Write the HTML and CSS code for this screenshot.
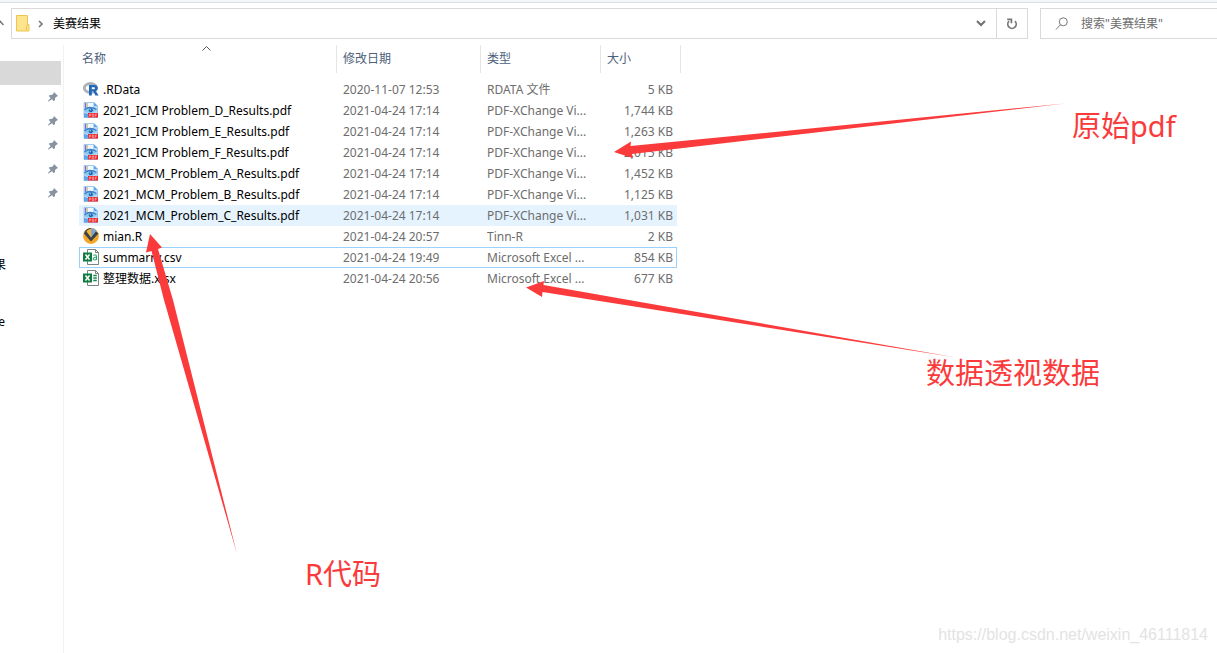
FILE: index.html
```html
<!DOCTYPE html>
<html lang="zh-CN">
<head>
<meta charset="utf-8">
<title>美赛结果</title>
<link rel="stylesheet" href="styles.css">
</head>
<body>
<svg class="defs" width="0" height="0" aria-hidden="true">
  <symbol id="pdf" viewBox="0 0 16 16">
    <path d="M1 .5h10l3.500 3.500v11.500H1z" fill="#b5d8f7" stroke="#8fc0ec" stroke-width=".8"/>
    <path d="M5 1h5v4H5z" fill="#f2f8ff"/><path d="M2 1h1v5H2z" fill="#8a63d8"/><path d="M3.500 1h1v4h-1z" fill="#e9b75c"/>
    <path d="M11 .5V4h3.500z" fill="#5fa4e8"/>
    <path d="M1.500 9C4 5 10 5 13.500 8.500 10 11.500 5 12 1.500 9z" fill="#8cc6f2"/>
    <path d="M1.500 8C4 5 9 4.500 13.500 7.500" fill="none" stroke="#3b82c8" stroke-width="1.400"/>
    <circle cx="7.800" cy="8.300" r="2" fill="#1f64a6"/><circle cx="7.300" cy="7.800" r=".8" fill="#8fe0f5"/>
    <path d="M1 11l4 1v3.500H1z" fill="#5fa4e8"/>
    <path d="M5 11h10v4.500H5z" fill="#ee2228"/>
    <path d="M6.300 14.800v-2.800h1.400v1.400H6.300M9.200 12h1.500v2.500H9.200zM12.300 14.800V12h1.700M12.300 13.400h1.300" fill="none" stroke="#ffb5b5" stroke-width=".7"/>
  </symbol>
  <symbol id="rdata" viewBox="0 0 16 16">
    <ellipse cx="7.500" cy="7" rx="6.200" ry="4.500" fill="none" stroke="#adb1b8" stroke-width="2.800"/>
    <path d="M6 14.500V4h5.200c4.400 0 4.500 5.300 1.400 5.800l3 4.700h-3.200l-2.200-4.200H8.800v4.200zM8.800 6.200v2.100h2c1.600 0 1.600-2.100 0-2.100z" fill="#2368b8" fill-rule="evenodd"/>
  </symbol>
  <symbol id="tinn" viewBox="0 0 16 16">
    <circle cx="8" cy="8" r="7.900" fill="#f5a623"/>
    <path d="M1.500 3.500Q4 .3 8 .1V8L5 3.500 1.500 4z" fill="#3d4650"/>
    <path d="M.5 5L3.500 3.500 8 9.500 12.500 3l3 2.500L8 13.500z" fill="#37424d"/>
    <path d="M3.500 3Q5.500 1 8 .8V9z" fill="#f8b32f"/>
    <path d="M8 .2Q11.500.3 13.500 2.500L8 9.500z" fill="#7fa6cf"/>
  </symbol>
  <symbol id="sheet" viewBox="0 0 16 16">
    <path d="M4.500.5h8l3 3v12h-11z" fill="#fff" stroke="#7d8581"/><path d="M12.500.5v3h3" fill="none" stroke="#7d8581"/>
    <path d="M0 3.500h9v9H0z" fill="#107c41"/><path d="M2.500 5.500l4 5M6.500 5.500l-4 5" stroke="#fff" stroke-width="1.500"/>
  </symbol>
  <symbol id="csv" viewBox="0 0 16 16">
    <use href="#sheet"/><path d="M10.300 6.300c2-.8 3.200-.2 3.200 1.200v3.500M13.500 8c-4-.2-4 3-1.800 3 1 0 1.800-.8 1.800-1.500" fill="none" stroke="#29a66a" stroke-width="1.100"/>
  </symbol>
  <symbol id="xlsx" viewBox="0 0 16 16">
    <use href="#sheet"/><path d="M10.300 5.500h3.500M10.300 8h3.500M10.300 10.500h3.500" stroke="#168a4e" stroke-width="1.300"/>
  </symbol>
  <symbol id="pin" viewBox="0 0 10 10">
    <path d="M6 0l4 4-1.200.4-1.700 1.700-.2 2.200-1 .9-2-2L.5 9.500H0V9l2.600-3L.8 4.100l.9-1 2.200-.2 1.700-1.700z" fill="#8794a0"/>
  </symbol>
</svg>

<header class="toolbar">
  <svg class="up" width="4" height="8" viewBox="0 0 4 8"><path d="M-1 1l4.500 5" fill="none" stroke="#777" stroke-width="1.500"/></svg>
  <div class="address">
    <svg class="folder" width="14" height="17" viewBox="0 0 14 17"><path d="M.5.500h11v9h1.500v6.500H.5z" fill="#ffe48f" stroke="#ecc650"/><path d="M10.500 15.500V11l1-1.500" fill="none" stroke="#ecc650"/></svg>
    <svg width="6" height="8" viewBox="0 0 6 8"><path d="M1 1l3 3-3 3" fill="none" stroke="#777" stroke-width="1.600"/></svg>
    <span class="crumb">美赛结果</span>
    <button class="drop" aria-label="历史记录"><svg width="10" height="7" viewBox="0 0 10 7"><path d="M1 1l4 4 4-4" fill="none" stroke="#707070" stroke-width="2"/></svg></button>
    <button class="reload" aria-label="刷新"><svg width="12" height="12" viewBox="0 0 12 12"><path d="M3 3.200A4.200 4.200 0 1 0 9 3.200M1.200 1.300h4.200v4" fill="none" stroke="#777" stroke-width="1.700"/></svg></button>
  </div>
  <label class="search">
    <svg width="14" height="14" viewBox="0 0 14 14"><circle cx="8.300" cy="4.800" r="4" fill="none" stroke="#777"/><path d="M5.500 7.700L1 12.500" stroke="#777"/></svg>
    <input type="search" aria-label="搜索" placeholder='搜索"美赛结果"'>
  </label>
</header>

<div class="body">
  <nav class="side">
    <div class="current"></div>
    <ul class="pins">
      <li><svg><use href="#pin"/></svg></li><li><svg><use href="#pin"/></svg></li><li><svg><use href="#pin"/></svg></li><li><svg><use href="#pin"/></svg></li><li><svg><use href="#pin"/></svg></li>
    </ul>
    <span class="tail first">果</span>
    <span class="tail">e</span>
  </nav>
  <main>
    <table class="files">
      <colgroup><col class="c-name"><col class="c-date"><col class="c-type"><col class="c-size"><col class="c-end"></colgroup>
      <thead><tr><th>名称<svg class="sort" width="9" height="5" viewBox="0 0 9 5"><path d="M.5 4.500l4-4 4 4" fill="none" stroke="#555"/></svg></th><th>修改日期</th><th>类型</th><th>大小</th><th></th></tr></thead>
      <tbody>
        <tr><td><svg><use href="#rdata"/></svg>.RData</td><td>2020-11-07 12:53</td><td>RDATA 文件</td><td>5 KB</td></tr>
        <tr><td><svg><use href="#pdf"/></svg>2021_ICM Problem_D_Results.pdf</td><td>2021-04-24 17:14</td><td>PDF-XChange Vi...</td><td>1,744 KB</td></tr>
        <tr><td><svg><use href="#pdf"/></svg>2021_ICM Problem_E_Results.pdf</td><td>2021-04-24 17:14</td><td>PDF-XChange Vi...</td><td>1,263 KB</td></tr>
        <tr><td><svg><use href="#pdf"/></svg>2021_ICM Problem_F_Results.pdf</td><td>2021-04-24 17:14</td><td>PDF-XChange Vi...</td><td>2,015 KB</td></tr>
        <tr><td><svg><use href="#pdf"/></svg>2021_MCM_Problem_A_Results.pdf</td><td>2021-04-24 17:14</td><td>PDF-XChange Vi...</td><td>1,452 KB</td></tr>
        <tr><td><svg><use href="#pdf"/></svg>2021_MCM_Problem_B_Results.pdf</td><td>2021-04-24 17:14</td><td>PDF-XChange Vi...</td><td>1,125 KB</td></tr>
        <tr class="hover"><td><svg><use href="#pdf"/></svg>2021_MCM_Problem_C_Results.pdf</td><td>2021-04-24 17:14</td><td>PDF-XChange Vi...</td><td>1,031 KB</td></tr>
        <tr><td><svg><use href="#tinn"/></svg>mian.R</td><td>2021-04-24 20:57</td><td>Tinn-R</td><td>2 KB</td></tr>
        <tr class="focus"><td><svg><use href="#csv"/></svg>summarry.csv</td><td>2021-04-24 19:49</td><td>Microsoft Excel ...</td><td>854 KB</td></tr>
        <tr><td><svg><use href="#xlsx"/></svg>整理数据.xlsx</td><td>2021-04-24 20:56</td><td>Microsoft Excel ...</td><td>677 KB</td></tr>
      </tbody>
    </table>
  </main>
</div>

<svg class="arrows" width="1217" height="653" viewBox="0 0 1217 653" fill="#fb3b3b" aria-hidden="true">
  <path d="M614 152L631 141.500 630.500 146 1065 103.500 632 154 632.500 158z"/>
  <path d="M526 287.500L544 281 543.500 285 956 357.500 542.500 292 542 297z"/>
  <path d="M150 234L162 247.500 158 249 173 300 237 554 164 300 151.500 251 146 252.500z"/>
</svg>
<span class="note note-pdf">原始pdf</span>
<span class="note note-pivot">数据透视数据</span>
<span class="note note-code">R代码</span>
<span class="watermark">https://blog.csdn.net/weixin_46111814</span>
</body>
</html>
```
FILE: styles.css
```css
* { box-sizing: border-box; }
body {
  margin: 0;
  min-height: 100vh;
  display: flex;
  flex-direction: column;
  position: relative;
  overflow: hidden;
  background: #fff;
  color: #111;
  font: 12px/20px "Noto Sans", "Noto Sans CJK SC", sans-serif;
}
body::before { content: ""; height: 2px; background: #f5f6f7; }
.defs { position: absolute; }
.toolbar {
  display: flex;
  align-items: flex-start;
  height: 43px;
  padding-top: 5px;
  border-top: 1px solid #dcdfe2;
}
.up { margin: 11px 7px 0 0; }
.address, .search {
  display: flex;
  align-items: center;
  height: 31px;
  border: 1px solid #d9d9d9;
}
.address { flex: 1; padding-left: 4px; }
.folder { margin-right: 8px; }
.crumb { flex: 1; margin-left: 9px; color: #000; }
button {
  display: flex;
  align-items: center;
  justify-content: center;
  width: 30px;
  height: 29px;
  padding: 0;
  border: 0;
  background: none;
}
.reload { border-left: 1px solid #d9d9d9; width: 31px; }
.search { width: 177px; margin-left: 12px; padding-left: 14px; border-right: 0; }
.search input {
  flex: 1;
  min-width: 0;
  margin-left: 12px;
  padding: 0;
  border: 0;
  outline: 0;
  background: none;
  font: inherit;
}
.search input::placeholder { color: #6d6d6d; opacity: 1; }
.body { flex: 1; display: flex; }
.side {
  width: 64px;
  border-right: 1px solid #f2f2f2;
  padding-top: 16px;
  display: flex;
  flex-direction: column;
}
.current { width: 61px; height: 24px; background: #d9d9d9; }
.pins { list-style: none; margin: 0; padding: 0 5px 0 0; }
.pins li { height: 24px; display: flex; align-items: center; justify-content: flex-end; }
.pins svg { width: 10px; height: 10px; }
.tail { width: 6px; overflow: hidden; display: flex; justify-content: flex-end; margin-top: 37px; color: #000; }
.tail:last-child { width: 5px; }
.tail.first { margin-top: 50px; }
main { flex: 1; padding-left: 15px; }
.files { table-layout: fixed; border-spacing: 0; width: 602px; }
.c-name { width: 258px; }
.c-date { width: 144px; }
.c-type { width: 120px; }
.c-size { width: 76px; }
.c-end { width: 4px; }
th {
  position: relative;
  height: 34px;
  padding: 0 0 6px 6px;
  text-align: left;
  font-weight: 400;
  color: #4c607a;
  background: linear-gradient(#e5e5e5, #e5e5e5) right top / 1px 28px no-repeat;
}
th:first-child { padding-left: 3px; }
th:nth-child(4) { background: none; }
th:last-child { padding: 0; }
.sort { position: absolute; left: 123px; top: 1px; }
td { height: 21px; padding: 0 0 0 6px; color: #6d6d6d; white-space: nowrap; }
td:first-child { padding-left: 4px; color: #000; }
td:nth-child(4) { padding: 0 4px 0 0; text-align: right; }
td svg { width: 16px; height: 16px; margin-right: 4px; vertical-align: -3px; }
.hover td { background: #e5f3ff; }
.focus td { border: solid #99d1ff; border-width: 1px 0; line-height: 18px; }
.focus td:first-child { border-left-width: 1px; padding-left: 3px; }
.focus td:nth-child(4) { border-right-width: 1px; padding-right: 3px; }
.arrows { position: absolute; left: 0; top: 0; }
.note { position: absolute; color: #fb3b3b; font-size: 29px; line-height: 40px; white-space: nowrap; }
.note-pdf { left: 1072px; top: 106px; }
.note-pivot { left: 926px; top: 353px; }
.note-code { left: 305px; top: 554px; }
.watermark {
  position: absolute;
  right: 9px;
  bottom: 8px;
  color: #e3e3e3;
  font: 16px/20px "Liberation Sans", Arial, sans-serif;
}
```
